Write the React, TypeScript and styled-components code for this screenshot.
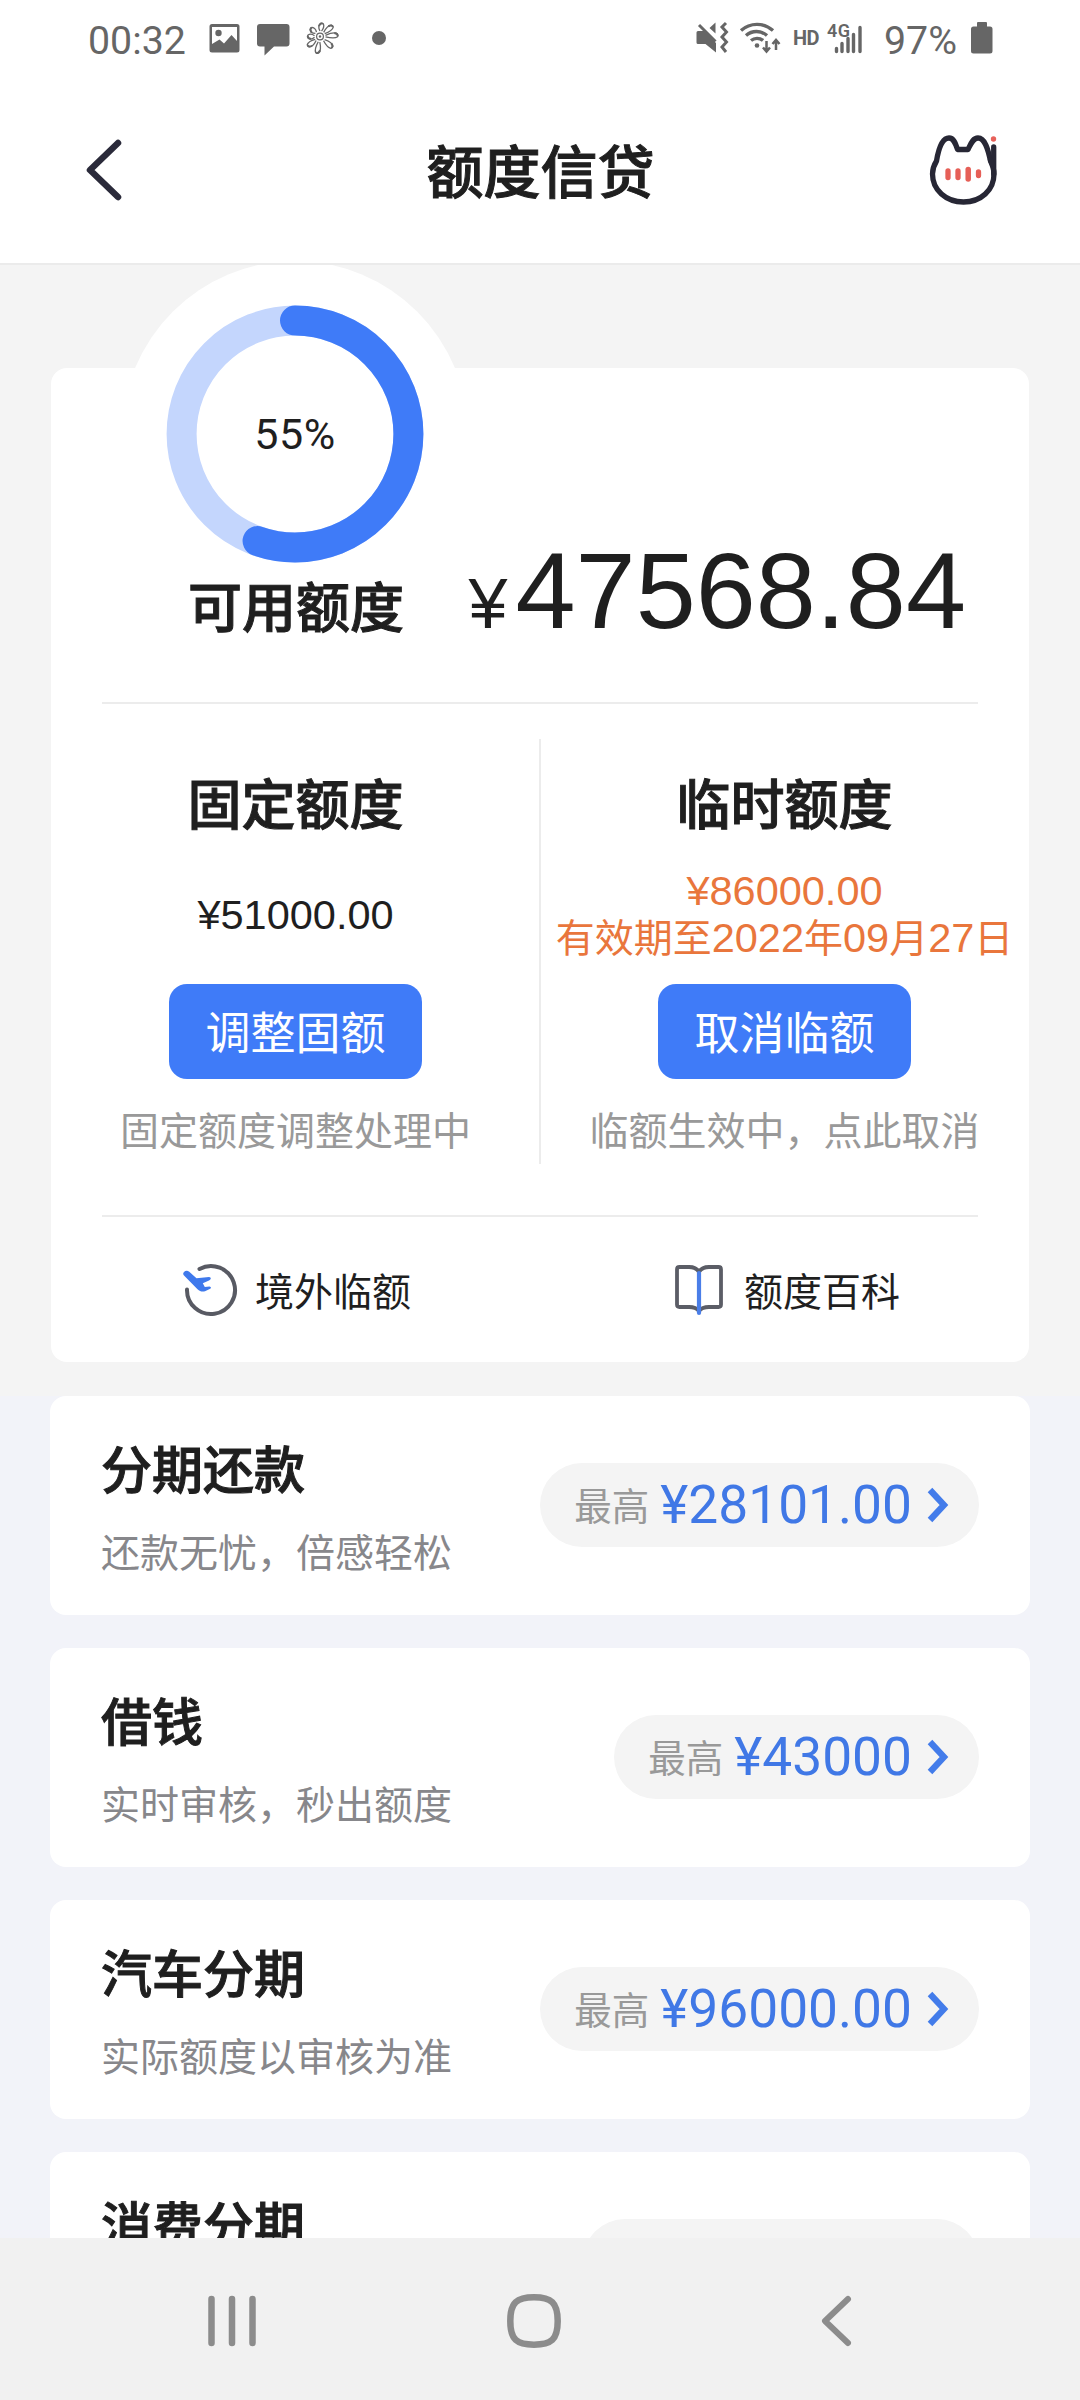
import React from 'react';
import styled, { createGlobalStyle } from 'styled-components';

const cjk = `'Noto Sans CJK SC', sans-serif`;
const latin = `Roboto, 'Noto Sans CJK SC', sans-serif`;
const arial = `'Liberation Sans', 'Noto Sans CJK SC', sans-serif`;

const blue = '#3f7bf8';
const ink = '#1f1f1f';

const GlobalStyle = createGlobalStyle`
  * { box-sizing: border-box; }
  body { margin: 0; background: #f4f4f4; }
`;

const Screen = styled.div`
  width: 1080px;
  height: 2400px;
  overflow: hidden;
  display: flex;
  flex-direction: column;
  background: #f2f3f9;
  color: ${ink};
  font-family: ${cjk};
  white-space: nowrap;
`;

const StatusBar = styled.div`
  flex: none;
  height: 80px;
  padding: 0 87px 0 88px;
  display: flex;
  justify-content: space-between;
  align-items: center;
  background: #fff;
  color: #666;
  font: 400 39.3px/80px ${latin};
`;

const StatusGroup = styled.div`
  display: flex;
  align-items: center;
  height: 80px;
`;

const Clock = styled.span`
  width: 112px;
  padding-top: 1px;
`;

const BatteryLevel = styled.span`
  width: 89px;
  padding: 1px 0 0 2px;
`;

const StatusIcons = styled.svg`
  display: block;
`;

const Header = styled.header`
  flex: none;
  height: 185px;
  padding: 0 77px 4px 81px;
  display: flex;
  align-items: center;
  justify-content: space-between;
  background: #fff;
  border-bottom: 2px solid #ebebeb;
`;

const HeaderSide = styled.div<{ $end?: boolean }>`
  width: 90px;
  display: flex;
  justify-content: ${(p) => (p.$end ? 'flex-end' : 'flex-start')};
`;

const PageTitle = styled.h1`
  margin: 0 3px 4px 0;
  font: 500 57px/80px ${cjk};
  -webkit-text-stroke: 1px currentColor;
`;

const Content = styled.main`
  flex: none;
  height: 1973px;
  overflow: hidden;
`;

const Overview = styled.section`
  height: 1131px;
  padding: 103px 51px 0;
  background: #f4f4f4;
`;

const QuotaCard = styled.div`
  position: relative;
  height: 994px;
  padding: 0 51px;
  border-radius: 16px;
  background: #fff;
`;

const Gauge = styled.div`
  position: absolute;
  left: 71px;
  top: -107px;
  width: 346px;
  height: 346px;
  display: grid;
  place-items: center;
  border-radius: 50%;
  background: #fff;
`;

const GaugeRing = styled.svg`
  grid-area: 1 / 1;
`;

const GaugeValue = styled.span`
  grid-area: 1 / 1;
  font: 400 43px/50px ${latin};
  letter-spacing: 0.5px;
`;

const Available = styled.div`
  position: relative;
  height: 336px;
  padding: 0 12px 0 86px;
  display: flex;
  justify-content: space-between;
  align-items: flex-end;
  border-bottom: 2px solid #ececec;
`;

const QuotaTitle = styled.h2`
  margin: 0;
  font: 500 54px/80px ${cjk};
  -webkit-text-stroke: 1px currentColor;
`;

const AvailableLabel = styled(QuotaTitle)`
  height: 137px;
`;

const AvailableAmount = styled.div`
  display: flex;
  align-items: baseline;
  height: 171px;
  font: 400 108px/120px ${arial};
`;

const Currency = styled.span`
  margin-right: 8px;
  font-size: 70px;
`;

const Columns = styled.div`
  height: 511px;
  margin: 0 -51px;
  display: grid;
  grid-template-columns: 1fr 1fr;
  position: relative;
`;

const Separator = styled.div`
  position: absolute;
  left: 488px;
  top: 35px;
  width: 2px;
  height: 425px;
  background: #ececec;
`;

const Column = styled.div`
  padding-top: 58px;
  display: flex;
  flex-direction: column;
  align-items: center;
`;

const Amount = styled.div<{ $accent?: boolean }>`
  height: 142px;
  padding-top: 2px;
  display: flex;
  flex-direction: column;
  align-items: center;
  justify-content: center;
  color: ${(p) => (p.$accent ? '#e9763c' : ink)};
  font: 400 41.5px/48px ${arial};
`;

const AmountLine = styled.div`
  height: 47px;
  display: flex;
  align-items: baseline;
`;

const Unit = styled.span`
  font: 400 39px/42px ${cjk};
`;

const ActionButton = styled.button`
  width: 253px;
  height: 95px;
  padding: 0 0 2px;
  border: 0;
  border-radius: 18px;
  background: ${blue};
  color: #fff;
  font: 400 45px/93px ${cjk};
`;

const Caption = styled.div`
  margin-top: 19px;
  color: #999;
  font: 400 39px/60px ${cjk};
`;

const Links = styled.div`
  height: 146px;
  margin: 0 -51px;
  display: grid;
  grid-template-columns: 1fr 1fr;
`;

const LinkItem = styled.div<{ $shift?: number }>`
  padding-left: ${(p) => 130 + (p.$shift ?? 0)}px;
  display: flex;
  align-items: center;
  gap: ${(p) => 15 - (p.$shift ?? 0)}px;
`;

const LinkText = styled.span`
  padding-bottom: 3px;
  font: 400 39px/60px ${cjk};
`;

const Rule = styled.div`
  height: 2px;
  background: #ececec;
`;

const Products = styled.section`
  padding: 0 50px;
  display: flex;
  flex-direction: column;
  gap: 33px;
`;

const Product = styled.article`
  height: 219px;
  padding: 0 51px;
  display: flex;
  justify-content: space-between;
  border-radius: 16px;
  background: #fff;
`;

const ProductText = styled.div`
  padding-top: 35px;
`;

const ProductTitle = styled.h3`
  margin: 0;
  font: 500 51px/72px ${cjk};
  -webkit-text-stroke: 1px currentColor;
`;

const ProductNote = styled.p`
  margin: 17px 0 0;
  color: #87878b;
  font: 400 39px/60px ${cjk};
`;

const Pill = styled.div<{ $placeholder?: boolean }>`
  height: 84px;
  min-width: ${(p) => (p.$placeholder ? '396px' : '0')};
  margin-top: 67px;
  padding: 0 30px 0 34px;
  display: flex;
  align-items: center;
  border-radius: 42px;
  background: #f4f4f4;
`;

const PillLabel = styled.span`
  padding-bottom: 3px;
  color: #999;
  font: 400 37.5px/60px ${cjk};
`;

const PillAmount = styled.span`
  margin: 0 15px 0 11px;
  padding-top: 1px;
  color: #4078e6;
  font: 400 53.3px/83px ${latin};
`;

const NavBar = styled.nav`
  flex: none;
  height: 162px;
  padding: 4px 93px 0 81px;
  display: grid;
  grid-template-columns: repeat(3, 1fr);
  place-items: center;
  background: #f1f1f1;
`;

const petals: [number, number][] = [
  [-82, 14], [-40, 17], [-4, 18.5], [42, 17], [100, 17.5], [142, 16], [180, 13], [222, 13],
];

const LeftStatus = () => (
  <StatusIcons width="200" height="80" viewBox="200 0 200 80" fill="none">
    <path fill="#666" fillRule="evenodd" d="M212 24h25a2.500 2.500 0 0 1 2.500 2.500v23.500a2.500 2.500 0 0 1-2.500 2.500h-25a2.500 2.500 0 0 1-2.500-2.500v-23.500a2.500 2.500 0 0 1 2.500-2.500zM212 27v17l7.500-4.500 4.500 4 7.500-8.500 5.500 6v-14z" />
    <circle cx="218.500" cy="33" r="3.200" fill="#666" />
    <path fill="#666" d="M260 24h26.500a3 3 0 0 1 3 3v16.500a3 3 0 0 1-3 3h-12.500l-9.500 9v-9h-4.500a3 3 0 0 1-3-3v-16.500a3 3 0 0 1 3-3z" />
    <g transform="translate(320 36.500)" stroke="#666" strokeWidth="1.300" strokeLinejoin="round">
      <circle r="3.400" strokeWidth="1.200" />
      <circle r="1.200" fill="#666" stroke="none" />
      {petals.map(([a, l]) => (
        <g key={a} transform={`rotate(${a})`}>
          <path d={`M5.500 -.8Q${l - 4} -4 ${l - 1} -1.500Q${l} 0 ${l - 1} 1.500Q${l - 4} 3.500 5.500 .8`} />
          <path strokeWidth="2" d={`M${l - 4} -2.500Q${l} -1.500 ${l - 1} 1`} />
        </g>
      ))}
    </g>
    <circle cx="379" cy="38" r="7" fill="#666" />
  </StatusIcons>
);

const RightStatus = () => (
  <StatusIcons width="186" height="80" viewBox="698 0 186 80" fill="none" stroke="#666">
    <path fill="#666" stroke="none" d="M700 31h6l12 12v9.500l-10.500-8.500h-7.500a1.500 1.500 0 0 1-1.500-1.500v-10a1.500 1.500 0 0 1 1.500-1.500zM717.500 22.500v11l-6-5.500z" />
    <path d="M701 25l16.500 16.500" strokeWidth="3" />
    <path d="M728 23l-4 4 4.500 5-4.500 5 4.500 5-4.500 5 4 5" strokeWidth="3" />
    <g strokeWidth="3.400">
      <path d="M743 30.500a24 24 0 0 1 32 0" />
      <path d="M748 35.500a16 16 0 0 1 21 0" />
      <path d="M753 40.500a9.500 9.500 0 0 1 12 0" />
    </g>
    <circle cx="759" cy="45.500" r="2.300" fill="#666" stroke="none" />
    <path d="M768.500 41v10M765 47.500l3.500 4 3.500-4M778 50v-9.500M774.500 44l3.500-4 3.500 4" strokeWidth="2.500" />
    <g fill="#666" stroke="none" fontFamily="Roboto, sans-serif">
      <text x="795" y="44.500" fontSize="20" fontWeight="700" textLength="26.500">HD</text>
      <text x="829" y="37" fontSize="18" fontWeight="600" textLength="23">4G</text>
    </g>
    <path d="M838.500 48.500v3M844 43.500v8M850 38.500v13M855.500 34.500v17M862 27.500v24" strokeWidth="3.400" strokeLinecap="round" />
  </StatusIcons>
);

const Battery = () => (
  <StatusIcons width="22" height="80" viewBox="971 0 22 80">
    <path fill="#666" d="M978 22h8a1 1 0 0 1 1 1v3.500h3a2.500 2.500 0 0 1 2.500 2.500v22a2.500 2.500 0 0 1-2.500 2.500h-16.500a2.500 2.500 0 0 1-2.500-2.500v-22a2.500 2.500 0 0 1 2.500-2.500h3.500v-3.500a1 1 0 0 1 1-1z" />
  </StatusIcons>
);

const CatIcon = () => (
  <svg width="80" height="80" viewBox="923 130 80 80" fill="none" stroke="#272735" strokeWidth="5.300" strokeLinecap="round" strokeLinejoin="round">
    <path d="M957.500 149.500H968C971 143.500 973 138 978 138C985 138 988 149 990.500 161C992.500 165 994 169 994 174C994 190 981 202 963.500 202C946 202 932.500 190 932.500 174C932.500 169 934 165 936.500 161C938.500 149 942 138 949 138C954 138 955.500 143.500 957.500 149.500Z" />
    <path d="M993.700 147V174" />
    <path d="M990.500 160L993 166" />
    <circle cx="993.500" cy="139" r="2.700" fill="#e7615a" stroke="none" />
    <g stroke="#e65f57">
      <path d="M948 171v6.500M958 171v6.500M978.500 172v3.500" />
      <path d="M968.200 169.500v9.500" strokeWidth="5.500" />
    </g>
  </svg>
);

const PlaneIcon = () => (
  <svg width="59" height="60" viewBox="181 1260 59 60" fill="none">
    <path d="M199.500 1269A24 24 0 1 1 187 1289.500" stroke="#585a63" strokeWidth="4" strokeLinecap="round" />
    <path fill="#3f79ec" d="M184 1272c1.800-2 4-1.500 5.800.2l6.700 6 12.500-1.200c2.500.2 2.300 2.500 0 3.400l-6.200 2.800 2 3.800 4.700-.6c2 .2 1.800 1.800.2 2.600l-4.700 2.200c-3 .8-5.200 0-7.500-2l-13-13.200c-1.500-1.500-1.800-2.700-.5-4z" />
  </svg>
);

const BookIcon = () => (
  <svg width="59" height="60" viewBox="672 1261 59 60" fill="none" strokeLinecap="round" strokeLinejoin="round">
    <path d="M699 1273Q696 1268 689 1268H679.500Q677 1268 677 1270.500V1305.500Q677 1308 679.500 1308H689Q696 1308 699 1312Q702 1308 709 1308H718.500Q721 1308 721 1305.500V1270.500Q721 1268 718.500 1268H709Q702 1268 699 1273" stroke="#5b5d66" strokeWidth="3.800" />
    <path d="M699 1274V1314" stroke="#4a7ee8" strokeWidth="4.200" />
  </svg>
);

const products = [
  { title: '分期还款', note: '还款无忧，倍感轻松', amount: '¥28101.00' },
  { title: '借钱', note: '实时审核，秒出额度', amount: '¥43000' },
  { title: '汽车分期', note: '实际额度以审核为准', amount: '¥96000.00' },
  { title: '消费分期' },
];

const progress = 0.553;
const radius = 113.4;
const circumference = 2 * Math.PI * radius;

export default function App() {
  return (
    <Screen>
      <GlobalStyle />
      <StatusBar>
        <StatusGroup>
          <Clock>00:32</Clock>
          <LeftStatus />
        </StatusGroup>
        <StatusGroup>
          <RightStatus />
          <BatteryLevel>97%</BatteryLevel>
          <Battery />
        </StatusGroup>
      </StatusBar>
      <Header>
        <HeaderSide>
          <svg width="44" height="70" viewBox="81 135 44 70" fill="none" stroke="#2a2a3a" strokeWidth="6.500" strokeLinecap="round" strokeLinejoin="round">
            <path d="M118 143L90 170L118 197" />
          </svg>
        </HeaderSide>
        <PageTitle>额度信贷</PageTitle>
        <HeaderSide $end>
          <CatIcon />
        </HeaderSide>
      </Header>
      <Content>
        <Overview>
          <QuotaCard>
            <Gauge>
              <GaugeRing width="260" height="260" viewBox="-130 -130 260 260" fill="none" strokeWidth="30">
                <circle r={radius} stroke="#c4d6fd" />
                <circle r={radius} stroke={blue} strokeLinecap="round" strokeDasharray={`${circumference * progress} ${circumference}`} transform="rotate(-90)" />
              </GaugeRing>
              <GaugeValue>55%</GaugeValue>
            </Gauge>
            <Available>
              <AvailableLabel>可用额度</AvailableLabel>
              <AvailableAmount>
                <Currency>¥</Currency>
                <span>47568.84</span>
              </AvailableAmount>
            </Available>
            <Columns>
              <Column>
                <QuotaTitle>固定额度</QuotaTitle>
                <Amount>
                  <AmountLine>¥51000.00</AmountLine>
                </Amount>
                <ActionButton>调整固额</ActionButton>
                <Caption>固定额度调整处理中</Caption>
              </Column>
              <Column>
                <QuotaTitle>临时额度</QuotaTitle>
                <Amount $accent>
                  <AmountLine>¥86000.00</AmountLine>
                  <AmountLine>
                    <Unit>有效期至</Unit>2022<Unit>年</Unit>09<Unit>月</Unit>27<Unit>日</Unit>
                  </AmountLine>
                </Amount>
                <ActionButton>取消临额</ActionButton>
                <Caption>临额生效中，点此取消</Caption>
              </Column>
              <Separator />
            </Columns>
            <Rule />
            <Links>
              <LinkItem>
                <PlaneIcon />
                <LinkText>境外临额</LinkText>
              </LinkItem>
              <LinkItem $shift={2}>
                <BookIcon />
                <LinkText>额度百科</LinkText>
              </LinkItem>
            </Links>
          </QuotaCard>
        </Overview>
        <Products>
          {products.map((p) => (
            <Product key={p.title}>
              <ProductText>
                <ProductTitle>{p.title}</ProductTitle>
                {p.note && <ProductNote>{p.note}</ProductNote>}
              </ProductText>
              <Pill $placeholder={!p.amount}>
                {p.amount && (
                  <>
                    <PillLabel>最高</PillLabel>
                    <PillAmount>{p.amount}</PillAmount>
                    <svg width="22" height="36" viewBox="0 0 22 36" fill="none" stroke="#437cea" strokeWidth="6.300">
                      <path d="M3 3L17 18L3 33" />
                    </svg>
                  </>
                )}
              </Pill>
            </Product>
          ))}
        </Products>
      </Content>
      <NavBar>
        <svg width="50" height="54" viewBox="0 0 50 54" stroke="#8c8c8c" strokeWidth="6.500" strokeLinecap="round">
          <path d="M4.500 5V49M25 5V49M45.500 5V49" />
        </svg>
        <svg width="54" height="54" viewBox="0 0 54 54" fill="none" stroke="#8c8c8c" strokeWidth="6.500">
          <path d="M27 3.300C44 3.300 50.700 8 50.700 27C50.700 46 44 50.700 27 50.700C10 50.700 3.300 46 3.300 27C3.300 8 10 3.300 27 3.300Z" />
        </svg>
        <svg width="36" height="54" viewBox="0 0 36 54" fill="none" stroke="#8c8c8c" strokeWidth="6" strokeLinecap="round" strokeLinejoin="round">
          <path d="M30 5L7 27L30 49" />
        </svg>
      </NavBar>
    </Screen>
  );
}
